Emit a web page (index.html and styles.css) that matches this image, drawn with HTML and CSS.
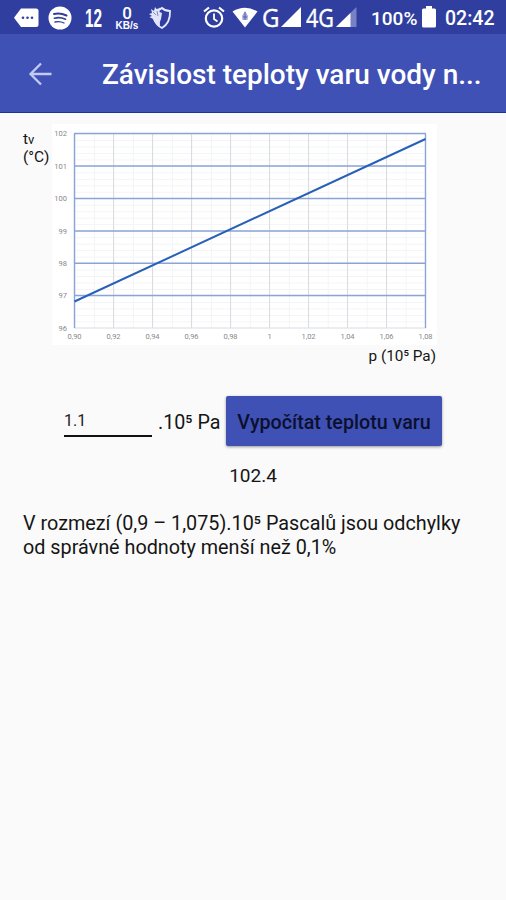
FILE: index.html
```html
<!DOCTYPE html>
<html lang="cs">
<head>
    <meta charset="UTF-8">
    <meta name="viewport" content="width=device-width, initial-scale=1.0">
    <title>Závislost teploty varu vody na tlaku</title>
    <link rel="stylesheet" href="styles.css">
</head>
<body>
    <div class="status-bar">
        <svg class="icon-message" width="25" height="20" viewBox="0 0 25 20">
            <path d="M7 0.5H22Q24.500 0.500 24.500 3V16.500Q24.500 19 22 19H7L0 9.800Z" fill="#fff"/>
            <g fill="#303f9f"><circle cx="9" cy="9.800" r="1.300"/><circle cx="13.500" cy="9.800" r="1.300"/><circle cx="18" cy="9.800" r="1.300"/></g>
        </svg>
        <svg class="icon-music" width="24" height="24" viewBox="0 0 24 24">
            <circle cx="12" cy="12" r="11.500" fill="#fff"/>
            <g fill="none" stroke="#303f9f" stroke-linecap="round"><path d="M6 8Q12 6.500 18.500 9.500" stroke-width="2"/><path d="M6.500 12.200Q12 10.800 17.500 13.200" stroke-width="1.700"/><path d="M7 16Q12 14.800 16 17" stroke-width="1.400"/></g>
        </svg>
        <svg class="icon-day" width="20" height="34" viewBox="0 0 20 34">
            <text class="condensed" x="0" y="26.500" font-size="26" textLength="17" lengthAdjust="spacingAndGlyphs">12</text>
        </svg>
        <div class="net-speed">
            <span class="speed">0</span>
            <span class="unit">KB/s</span>
        </div>
        <svg class="icon-shield" width="24" height="24" viewBox="0 0 24 24">
            <path d="M8 4Q12 4 14 2Q17 5 22 5Q22.500 17 14 22Q8 19 6 13" fill="none" stroke="#e6e9ff" stroke-width="1.800"/>
            <path d="M1 8L4 7L3 3L6 5L7 1L9 4L12 1.500L11.500 6L14 7L13 13Q11 16 12 20Q7 18 5 13L1.500 11L4 10Z" fill="#e2e5fa"/>
            <path d="M5 6L8 9M9 5L10 10" stroke="#7f8acb" stroke-width="1"/>
        </svg>
        <svg class="icon-alarm" width="22" height="23" viewBox="0 0 22 23">
            <g fill="none" stroke="#fff"><circle cx="11" cy="12.500" r="8.200" stroke-width="2.200"/><path d="M11 7.500V13L14.500 15.500" stroke-width="1.800"/><path d="M1 5.500L6 1.500M16 1.500L21 5.500" stroke-width="2.200"/></g>
        </svg>
        <svg class="icon-wifi" width="26" height="21" viewBox="0 0 26 21">
            <path d="M0.500 4.500Q13-3 25.500 4.500L13 20.500Z" fill="#fff"/>
            <path d="M13 4L16 9L15.500 13H10.500L10 9Z" fill="#a4acd9"/><path d="M13 5V13M11 10H15" stroke="#5362b5"/>
        </svg>
        <svg class="icon-g" width="18" height="36" viewBox="0 0 18 36">
            <text class="network" x="0" y="27" font-size="25" textLength="17.500" lengthAdjust="spacingAndGlyphs">G</text>
        </svg>
        <svg class="icon-signal" width="20" height="20" viewBox="0 0 20 20">
            <path d="M20 0V20H0Z" fill="#fff"/>
        </svg>
        <svg class="icon-4g" width="30" height="36" viewBox="0 0 30 36">
            <text class="network" x="0" y="27" font-size="25" textLength="28" lengthAdjust="spacingAndGlyphs">4G</text>
        </svg>
        <svg class="icon-signal-weak" width="21" height="20" viewBox="0 0 21 20">
            <path d="M20.500 0V20H0Z" fill="#7782c5"/>
            <path d="M14.500 6V20H0Z" fill="#fff"/>
        </svg>
        <span class="battery-level">100%</span>
        <svg class="icon-battery" width="14" height="22" viewBox="0 0 14 22">
            <path d="M4 0H10V2.500H12.500Q14 2.500 14 4V20Q14 21.500 12.500 21.500H1.500Q0 21.500 0 20V4Q0 2.500 1.500 2.500H4Z" fill="#fff"/>
        </svg>
        <span class="clock">02:42</span>
    </div>

    <div class="toolbar">
        <svg class="back" width="24" height="24" viewBox="0 0 24 24">
            <path d="M23.500 12H2.500M13 1.500L2.500 12L13 22.500" fill="none" stroke="#c3cbf5" stroke-width="2.300"/>
        </svg>
        <h1>Závislost teploty varu vody n...</h1>
    </div>

    <div class="content">
        <div class="chart-row">
            <div class="y-label">t<small>v</small><br>(°C)</div>
            <svg class="chart" width="385" height="221" viewBox="0 0 385 221">
                <defs>
                    <pattern id="minor" x="22.500" y="9.500" width="19.480" height="6.480" patternUnits="userSpaceOnUse">
                        <path d="M0 0.500H19.480M0.500 0V6.480" stroke="#f3f4f5" stroke-width="1"/>
                    </pattern>
                </defs>
                <rect width="385" height="221" fill="#fff"/>
                <rect x="22.500" y="9.500" width="351" height="194.500" fill="url(#minor)"/>
                <!-- vertical grid -->
                <path class="grid-x" d="M61.500 9.500V204M100.500 9.500V204M139.500 9.500V204M178.500 9.500V204M217.500 9.500V204M256.500 9.500V204M295.500 9.500V204M334.500 9.500V204M22 204H374"/>
                <!-- horizontal grid -->
                <path class="grid-y" d="M22 9.500H374M22 42H374M22 74.500H374M22 107H374M22 139.300H374M22 171.500H374M22.500 9.500V204M373.500 9.500V204"/>
                <path class="curve" d="M22.500 177.500L373.500 15"/>
                <g class="ticks-y">
                    <text x="15" y="12">102</text>
                    <text x="15" y="44.500">101</text>
                    <text x="15" y="77">100</text>
                    <text x="15" y="109.500">99</text>
                    <text x="15" y="141.800">98</text>
                    <text x="15" y="174">97</text>
                    <text x="15" y="206.500">96</text>
                </g>
                <g class="ticks-x">
                    <text x="22.500" y="215">0,90</text>
                    <text x="61.500" y="215">0,92</text>
                    <text x="100.500" y="215">0,94</text>
                    <text x="139.500" y="215">0,96</text>
                    <text x="178.500" y="215">0,98</text>
                    <text x="217.500" y="215">1</text>
                    <text x="256.500" y="215">1,02</text>
                    <text x="295.500" y="215">1,04</text>
                    <text x="334.500" y="215">1,06</text>
                    <text x="373.500" y="215">1,08</text>
                </g>
            </svg>
        </div>
        <div class="x-label">p (10⁵ Pa)</div>

        <div class="form-row">
            <input type="text" value="1.1">
            <span class="unit-label">.10⁵ Pa</span>
            <button>Vypočítat teplotu varu</button>
        </div>
        <div class="result">102.4</div>
        <p class="note">V rozmezí (0,9 – 1,075).10⁵ Pascalů jsou odchylky<br>od správné hodnoty menší než 0,1%</p>
    </div>
</body>
</html>
```
FILE: styles.css
```css
* {
    box-sizing: border-box;
}
body {
    font-family: Roboto, "Noto Sans", sans-serif;
    margin: 0;
    background: #fafafa;
    color: #151515;
    min-height: 100vh;
    overflow: hidden;
}
svg {
    display: block;
    flex: none;
}
.status-bar {
    display: flex;
    align-items: flex-start;
    height: 34px;
    padding: 6px 0 0 14px;
    background: #303f9f;
    color: #fff;
}
.icon-message {
    margin-top: 2px;
}
.icon-music {
    margin-left: 9px;
}
.icon-day {
    margin: -6px 0 0 13px;
}
.condensed {
    font-family: "Liberation Sans", sans-serif;
    font-weight: bold;
    fill: #fff;
}
.net-speed {
    display: flex;
    flex-direction: column;
    align-items: center;
    width: 26px;
    margin-left: 9px;
    font-weight: 500;
}
.speed {
    font-size: 17px;
    line-height: 14px;
}
.unit {
    margin-top: 1px;
    font-family: "Liberation Sans", sans-serif;
    font-size: 10px;
    font-weight: bold;
    line-height: 10px;
}
.icon-shield {
    margin-left: 8px;
}
.icon-alarm {
    margin-left: 31px;
}
.icon-wifi {
    margin: 1px 0 0 7px;
}
.network {
    font-family: "Open Sans", sans-serif;
    font-weight: 500;
    fill: #fff;
    stroke: #fff;
    stroke-width: 0.4;
}
.icon-g {
    margin: -6px 0 0 4px;
}
.icon-signal {
    margin: 1px 0 0 1px;
}
.icon-4g {
    margin: -6px 0 0 5px;
}
.icon-signal-weak {
    margin: 1px 0 0 0;
}
.battery-level,
.clock {
    font-size: 19px;
    font-weight: 500;
    line-height: 25px;
    white-space: nowrap;
}
.battery-level {
    width: 50px;
    margin-left: 14px;
}
.icon-battery {
    margin-left: 1px;
}
.clock {
    margin-left: 9px;
    font-size: 19.500px;
}
.toolbar {
    display: flex;
    align-items: center;
    height: 79px;
    padding-left: 28px;
    background: #3f51b5;
    border-bottom: 1px solid #1b339b;
}
.back {
    margin-top: 2px;
}
h1 {
    margin: 3px 0 0 50px;
    font-size: 28px;
    font-weight: 500;
    letter-spacing: -0.02px;
    color: #fff;
    white-space: nowrap;
}
.content {
    padding: 11px 23px 0;
}
.chart-row {
    display: flex;
}
.y-label {
    width: 29px;
    padding-top: 7px;
    font-size: 15.500px;
    line-height: 16.500px;
    white-space: nowrap;
}
.y-label small {
    font-size: 13px;
}
.grid-x {
    stroke: #dadce2;
    stroke-width: 1;
}
.grid-y {
    fill: none;
    stroke: #8ba4d8;
    stroke-width: 1.4;
}
.curve {
    stroke: #2860b8;
    stroke-width: 2;
}
.ticks-x,
.ticks-y {
    font-size: 7.500px;
    fill: #888;
}
.ticks-x {
    text-anchor: middle;
}
.ticks-y {
    text-anchor: end;
}
.x-label {
    padding: 1px 47px 0 0;
    font-size: 15.300px;
    line-height: 20px;
    text-align: right;
}
.form-row {
    display: flex;
    align-items: flex-start;
    margin-top: 30px;
    padding-left: 41px;
}
input {
    width: 88px;
    height: 41px;
    padding: 9px 0 0;
    border: none;
    border-bottom: 2px solid #111;
    background: none;
    font-family: inherit;
    font-size: 16px;
    color: #222;
}
.unit-label {
    width: 68px;
    margin: 15px 0 0 6px;
    font-size: 19.700px;
    line-height: 24px;
    white-space: nowrap;
}
button {
    flex: none;
    width: 216px;
    height: 50px;
    padding: 2px 0 0;
    border: none;
    border-radius: 2px;
    background: #3f51b5;
    box-shadow: 0 1px 3px rgba(0, 0, 0, 0.4);
    font-family: inherit;
    font-size: 19.700px;
    font-weight: 500;
    color: #0b102e;
    white-space: nowrap;
}
.result {
    margin-top: 18px;
    font-size: 19px;
    line-height: 24px;
    text-align: center;
}
.note {
    margin: 24px 0 0;
    font-size: 19.800px;
    line-height: 24px;
    white-space: nowrap;
}
```
